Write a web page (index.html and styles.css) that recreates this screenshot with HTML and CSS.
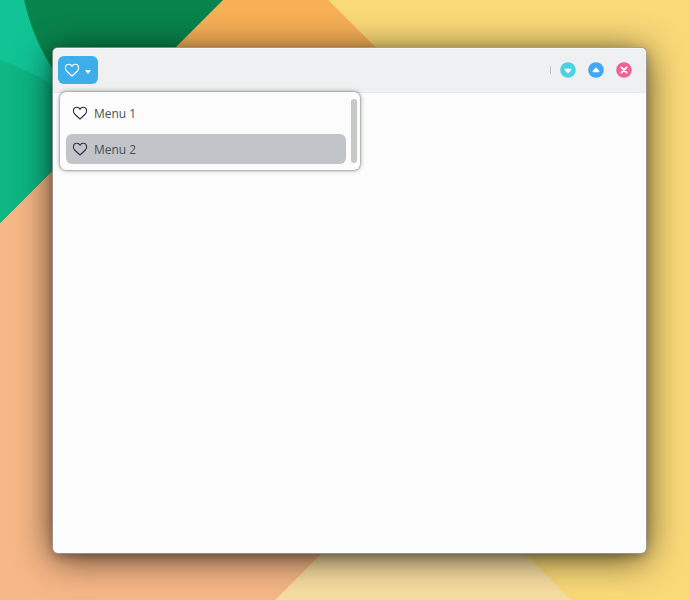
FILE: index.html
```html
<!DOCTYPE html>
<html lang="en">
<head>
<meta charset="utf-8">
<title>Menu</title>
<link rel="stylesheet" href="styles.css">
</head>
<body>
<svg class="wallpaper" viewBox="0 0 689 600" aria-hidden="true">
  <rect width="689" height="600" fill="#fad978"/>
  <path d="M0 0H328L628 300L328 600H0Z" fill="#f8b057"/>
  <path d="M0 223L223 0L550 325L275 600H0Z" fill="#f7b786"/>
  <path d="M175 48L223 0H328L376 48Z" fill="#f8b057"/>
  <path d="M275 600L423 452L571 600Z" fill="#f8dda0"/>
  <path d="M0 0H223L0 223Z" fill="#08834b"/>
  <path d="M0 0H24Q33 40 54 71L62 161L0 223Z" fill="#0db683"/>
  <path d="M0 0H24Q33 40 54 71V85Q28 70 0 60Z" fill="#10c495"/>
</svg>
<main class="window">
  <header class="header">
    <button class="menu-button" aria-label="Open menu">
      <svg class="heart" viewBox="0 0 16 14"><path d="M8 13L2.6 8C.5 5.9 1.1 1.5 4.6 1.3C6.4 1.2 7.5 2.2 8 3.4C8.5 2.2 9.6 1.2 11.4 1.3C14.9 1.5 15.5 5.9 13.4 8Z"/></svg>
      <svg class="arrow" viewBox="0 0 6 4"><path d="M0 0H6L3 4Z"/></svg>
    </button>
    <div class="controls">
      <span class="separator"></span>
      <svg class="control" viewBox="0 0 16 16"><circle cx="8" cy="8" r="7.8" fill="#4dd0e1"/><path d="M5.3 7.4H10.7L8 10.4Z" fill="#fff" stroke="#fff" stroke-width="1.5" stroke-linejoin="round"/></svg>
      <svg class="control" viewBox="0 0 16 16"><circle cx="8" cy="8" r="7.8" fill="#42a5f5"/><path d="M5.3 9.4H10.7L8 6.2Z" fill="#fff" stroke="#fff" stroke-width="1.5" stroke-linejoin="round"/></svg>
      <svg class="control" viewBox="0 0 16 16"><circle cx="8" cy="8" r="7.8" fill="#f06292"/><path d="M5.4 5.4L10.6 10.6M10.6 5.4L5.4 10.6" stroke="#fff" stroke-width="1.8" stroke-linecap="round"/></svg>
    </div>
  </header>
  <div class="popup">
    <div class="items">
      <div class="item"><svg class="heart" viewBox="0 0 16 14"><path d="M8 13L2.6 8C.5 5.9 1.1 1.5 4.6 1.3C6.4 1.2 7.5 2.2 8 3.4C8.5 2.2 9.6 1.2 11.4 1.3C14.9 1.5 15.5 5.9 13.4 8Z"/></svg><span class="label">Menu 1</span></div>
      <div class="item selected"><svg class="heart" viewBox="0 0 16 14"><path d="M8 13L2.6 8C.5 5.9 1.1 1.5 4.6 1.3C6.4 1.2 7.5 2.2 8 3.4C8.5 2.2 9.6 1.2 11.4 1.3C14.9 1.5 15.5 5.9 13.4 8Z"/></svg><span class="label">Menu 2</span></div>
    </div>
    <div class="scrollbar"></div>
  </div>
</main>
</body>
</html>
```
FILE: styles.css
```css
* { box-sizing: border-box; }
body {
  margin: 0;
  height: 600px;
  padding: 48px 43px 47px 53px;
  overflow: hidden;
  font: 13px/18px "Open Sans", "Noto Sans", sans-serif;
}
.wallpaper {
  position: absolute;
  inset: 0;
  width: 689px;
  height: 600px;
  z-index: -1;
}
.window {
  position: relative;
  width: 593px;
  height: 505px;
  border-radius: 5px;
  background: #fcfcfc;
  box-shadow: 0 0 0 1px rgba(160, 160, 160, .75), 0 5px 36px rgba(0, 0, 0, .7), 0 3px 10px rgba(0, 0, 0, .25);
}
.header {
  display: flex;
  justify-content: space-between;
  height: 45px;
  padding: 8px 14px 0 5px;
  border-radius: 5px 5px 0 0;
  border-bottom: 1px solid #e7e9ea;
  background: #eff0f1;
  box-shadow: inset 0 1px #f8f8f8;
}
.menu-button {
  display: flex;
  align-items: center;
  width: 40px;
  height: 28px;
  padding: 0 6px;
  border: 0;
  border-radius: 6px;
  background: #3daee9;
  color: #fff;
}
.heart {
  flex: none;
  width: 16px;
  height: 14px;
  fill: none;
  stroke: currentColor;
  stroke-width: 1.15;
  stroke-linejoin: round;
}
.arrow {
  width: 6px;
  height: 4px;
  margin: 4px 0 0 5px;
  fill: currentColor;
}
.controls { display: flex; align-items: center; gap: 12px; height: 28px; }
.separator { width: 1px; height: 8px; margin-right: -3px; background: #c3c6c8; }
.control { width: 16px; height: 16px; }
.popup {
  position: absolute;
  left: 7px;
  top: 44px;
  display: flex;
  gap: 5px;
  width: 300px;
  height: 78px;
  padding: 6px 3px 6px 6px;
  border-radius: 6px;
  background: #fcfcfc;
  box-shadow: 0 0 2px rgba(0, 0, 0, .45), 0 0 5px rgba(0, 0, 0, .4);
}
.items { display: flex; flex-direction: column; gap: 6px; width: 280px; }
.item {
  display: flex;
  align-items: center;
  gap: 6px;
  height: 30px;
  padding-left: 6px;
  border-radius: 6px;
  color: #31363b;
}
.selected { background: #c1c5ca; }
.label { transform: scaleX(.92); transform-origin: left; color: #4b5055; }
.scrollbar { width: 6px; height: 64px; margin-top: 1px; border-radius: 3px; background: #c7c9c6; }
```
